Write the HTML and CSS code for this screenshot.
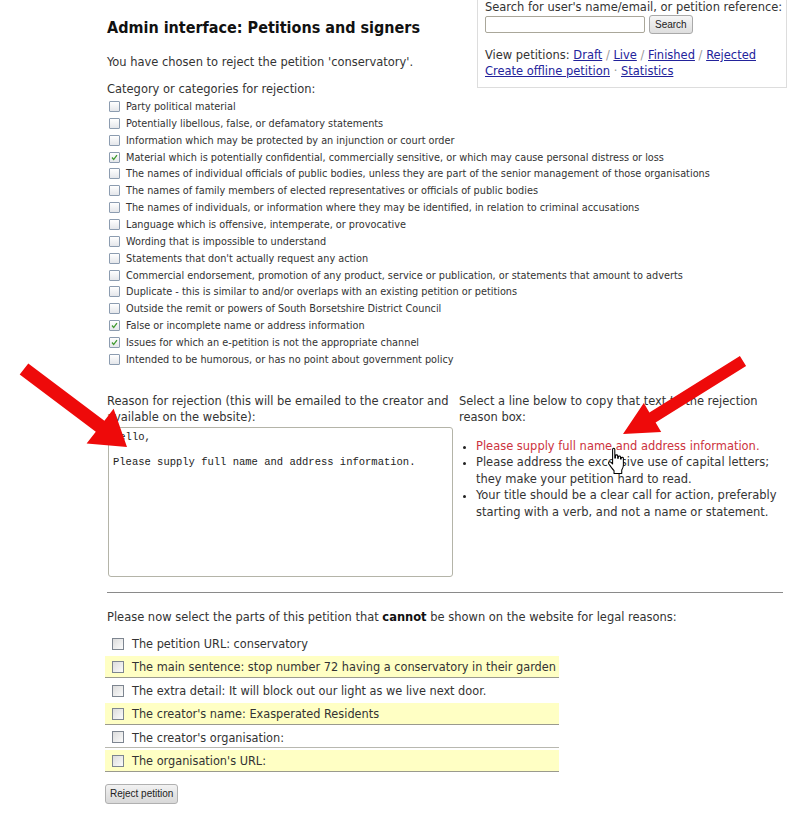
FILE: index.html
```html
<!DOCTYPE html>
<html>
<head>
<meta charset="utf-8">
<title>Admin interface: Petitions and signers</title>
<link rel="stylesheet" href="styles.css">
</head>
<body>
<div class="page">
  <div class="admin-box">
    <div class="search-label">Search for user's name/email, or petition reference:</div>
    <div class="search-row"><input type="text" class="search-input"><button class="btn">Search</button></div>
    <div class="view-links">View petitions: <a href="#">Draft</a> <span class="sep">/</span> <a href="#">Live</a> <span class="sep">/</span> <a href="#">Finished</a> <span class="sep">/</span> <a href="#">Rejected</a><br><a href="#">Create offline petition</a> <span class="sep">·</span> <a href="#">Statistics</a></div>
  </div>

  <h1>Admin interface: Petitions and signers</h1>
  <p class="intro">You have chosen to reject the petition 'conservatory'.</p>
  <div class="cat-label">Category or categories for rejection:</div>
  <ul class="cats">
    <li><span class="cb"></span>Party political material</li>
    <li><span class="cb"></span>Potentially libellous, false, or defamatory statements</li>
    <li><span class="cb"></span>Information which may be protected by an injunction or court order</li>
    <li><span class="cb checked"><svg viewBox="0 0 11 11"><path d="M2.5 5.5 L4.5 8 L8.5 2.5" fill="none" stroke="#3f9a2f" stroke-width="1.6"/></svg></span>Material which is potentially confidential, commercially sensitive, or which may cause personal distress or loss</li>
    <li><span class="cb"></span>The names of individual officials of public bodies, unless they are part of the senior management of those organisations</li>
    <li><span class="cb"></span>The names of family members of elected representatives or officials of public bodies</li>
    <li><span class="cb"></span>The names of individuals, or information where they may be identified, in relation to criminal accusations</li>
    <li><span class="cb"></span>Language which is offensive, intemperate, or provocative</li>
    <li><span class="cb"></span>Wording that is impossible to understand</li>
    <li><span class="cb"></span>Statements that don't actually request any action</li>
    <li><span class="cb"></span>Commercial endorsement, promotion of any product, service or publication, or statements that amount to adverts</li>
    <li><span class="cb"></span>Duplicate - this is similar to and/or overlaps with an existing petition or petitions</li>
    <li><span class="cb"></span>Outside the remit or powers of South Borsetshire District Council</li>
    <li><span class="cb checked"><svg viewBox="0 0 11 11"><path d="M2.5 5.5 L4.5 8 L8.5 2.5" fill="none" stroke="#3f9a2f" stroke-width="1.6"/></svg></span>False or incomplete name or address information</li>
    <li><span class="cb checked"><svg viewBox="0 0 11 11"><path d="M2.5 5.5 L4.5 8 L8.5 2.5" fill="none" stroke="#3f9a2f" stroke-width="1.6"/></svg></span>Issues for which an e-petition is not the appropriate channel</li>
    <li><span class="cb"></span>Intended to be humorous, or has no point about government policy</li>
  </ul>

  <div class="reason">
    <div class="reason-left">
      <div class="reason-label">Reason for rejection (this will be emailed to the creator and available on the website):</div>
      <textarea class="reason-text">Hello,

Please supply full name and address information.</textarea>
    </div>
    <div class="reason-right">
      <div class="reason-label">Select a line below to copy that text to the rejection reason box:</div>
      <ul class="snippets">
        <li class="active">Please supply full name and address information.</li>
        <li>Please address the excessive use of capital letters; they make your petition hard to read.</li>
        <li>Your title should be a clear call for action, preferably starting with a verb, and not a name or statement.</li>
      </ul>
    </div>
  </div>

  <hr class="rule">

  <p class="parts-intro">Please now select the parts of this petition that <b>cannot</b> be shown on the website for legal reasons:</p>
  <div class="parts">
    <div class="part"><span class="wcb"></span>The petition URL: conservatory</div>
    <div class="part alt"><span class="wcb"></span>The main sentence: stop number 72 having a conservatory in their garden</div>
    <div class="part"><span class="wcb"></span>The extra detail: It will block out our light as we live next door.</div>
    <div class="part alt"><span class="wcb"></span>The creator's name: Exasperated Residents</div>
    <div class="part lined"><span class="wcb"></span>The creator's organisation:</div>
    <div class="part alt"><span class="wcb"></span>The organisation's URL:</div>
  </div>
  <button class="reject">Reject petition</button>
</div>

<svg class="overlay" width="793" height="817" viewBox="0 0 793 817">
  <polygon fill="#ee0a0a" points="28.3,363.5 104.4,420.7 113.6,408.8 127,447 86.6,443.6 95.8,431.7 19.7,374.5"/>
  <polygon fill="#ee0a0a" points="739.9,355.9 746.1,366.1 655.6,422.6 661.2,432.1 623,434 643.8,402.9 649.4,412.4"/>
  <g transform="translate(606,447) scale(1.1)">
    <path d="M6,2 C6,0.8 8,0.8 8,2 L8,10 L8.6,10 L8.6,8 C8.6,6.9 10.6,6.9 10.6,8 L10.6,10.3 L11.2,10.3 L11.2,9 C11.2,7.9 13.2,7.9 13.2,9 L13.2,11 L13.8,11 L13.8,10.2 C13.8,9.1 15.8,9.1 15.8,10.2 L15.8,16.5 C15.8,18.5 14.8,20 14.3,21 L14.3,24 L7.3,24 L7.3,21.5 C6.2,20.5 3.8,17 2.6,15.4 C1.8,14.2 3,12.8 4.3,13.7 L6,15.4 Z" fill="#fff" stroke="#000" stroke-width="0.95" stroke-linejoin="round"/>
  </g>
</svg>
</body>
</html>
```
FILE: styles.css
```css
* { box-sizing: border-box; }

body {
  margin: 0;
  background: #fff;
  font-family: "DejaVu Sans Condensed", "DejaVu Sans", sans-serif;
  font-size: 12.75px;
  color: #333;
  position: relative;
}

.page {
  margin-left: 107px;
  width: 680px;
  padding-top: 1px;
}

a { color: #23239b; text-decoration: underline; }

/* top-right admin box */
.admin-box {
  float: right;
  width: 310px;
  margin-top: -1px;
  border: 1px solid #ddd;
  border-top: none;
  padding: 0 2px 8px 7px;
  margin-left: 12px;
}
.search-label { line-height: 14px; white-space: nowrap; }
.search-row { display: flex; align-items: center; gap: 4px; margin-top: 1px; }
.search-input {
  width: 160px;
  height: 17px;
  border: 1px solid #aaa79a;
  border-radius: 2px;
  padding: 0 2px;
}
.btn {
  height: 19px;
  padding: 0 5px;
  font-family: "Liberation Sans", Arial, sans-serif;
  font-size: 10px;
  color: #222;
  border: 1px solid #a9a9a9;
  border-radius: 3px;
  background: linear-gradient(#f6f6f6, #dedede);
}
.view-links { margin-top: 13px; line-height: 16px; }
.sep { color: #999; }

h1 {
  font-size: 16px;
  font-weight: bold;
  color: #111;
  margin: 16px 0 0;
  line-height: 22px;
}
.intro { margin: 15px 0 0; line-height: 16px; }
.cat-label { margin-top: 11px; line-height: 16px; }

.cats { list-style: none; margin: 1px 0 0; padding: 0 0 0 2px; font-size: 10.8px; }
.cats li {
  display: flex;
  align-items: center;
  height: 16.87px;
  white-space: nowrap;
}
.cb {
  flex: none;
  width: 11px;
  height: 11px;
  margin-right: 6px;
  border: 1px solid #8c9cb0;
  border-radius: 1px;
  background: linear-gradient(#ffffff, #e4e6ea);
  display: flex;
}
.cb svg { width: 100%; height: 100%; }

/* reason */
.reason {
  display: grid;
  grid-template-columns: 345px 1fr;
  column-gap: 7px;
  margin-top: 25px;
}
.reason-label { line-height: 16px; }
.reason-text {
  display: block;
  width: 345px;
  height: 150px;
  margin: 2px 0 0 1px;
  padding: 3px 4px;
  border: 1px solid #b4b4a8;
  border-radius: 3px;
  font-family: "Liberation Mono", "Courier New", monospace;
  font-size: 10.5px;
  line-height: 12.5px;
  color: #222;
  resize: none;
}
.snippets { margin: 13px 0 0; padding: 0 0 0 17px; line-height: 16.5px; }
.snippets li { list-style: disc; }
.snippets li::marker { color: #222; font-size: 11px; }
.snippets li.active { color: #cc3340; }

.rule {
  margin: 15px 0 0;
  width: 676px;
  border: none;
  border-top: 1px solid #8a8a8a;
}

.parts-intro { margin: 16px 0 0; line-height: 16px; }
.parts-intro b { color: #111; }

.parts { margin-top: 8px; width: 454px; margin-left: -2px; font-size: 12.6px; }
.part {
  display: flex;
  align-items: center;
  height: 21.5px;
  margin-bottom: 2px;
  padding-left: 7px;
  white-space: nowrap;
}
.part.alt { background: #ffffc4; border-bottom: 1px solid #9a9a8e; }
.part.lined { border-bottom: 1px solid #b8b8b0; }
.wcb {
  flex: none;
  width: 12px;
  height: 12px;
  margin-right: 8px;
  border: 1px solid #7d8590;
  background: linear-gradient(135deg, #dcdcdc, #fbfbfb);
}

.reject {
  margin: 10px 0 0 -2px;
  height: 20px;
  padding: 0 4px;
  font-family: "Liberation Sans", Arial, sans-serif;
  font-size: 10px;
  color: #222;
  border: 1px solid #b0b0b0;
  border-radius: 3px;
  background: linear-gradient(#f2f2f2, #d8d8d8);
}

.overlay {
  position: absolute;
  left: 0;
  top: 0;
  pointer-events: none;
}
```
